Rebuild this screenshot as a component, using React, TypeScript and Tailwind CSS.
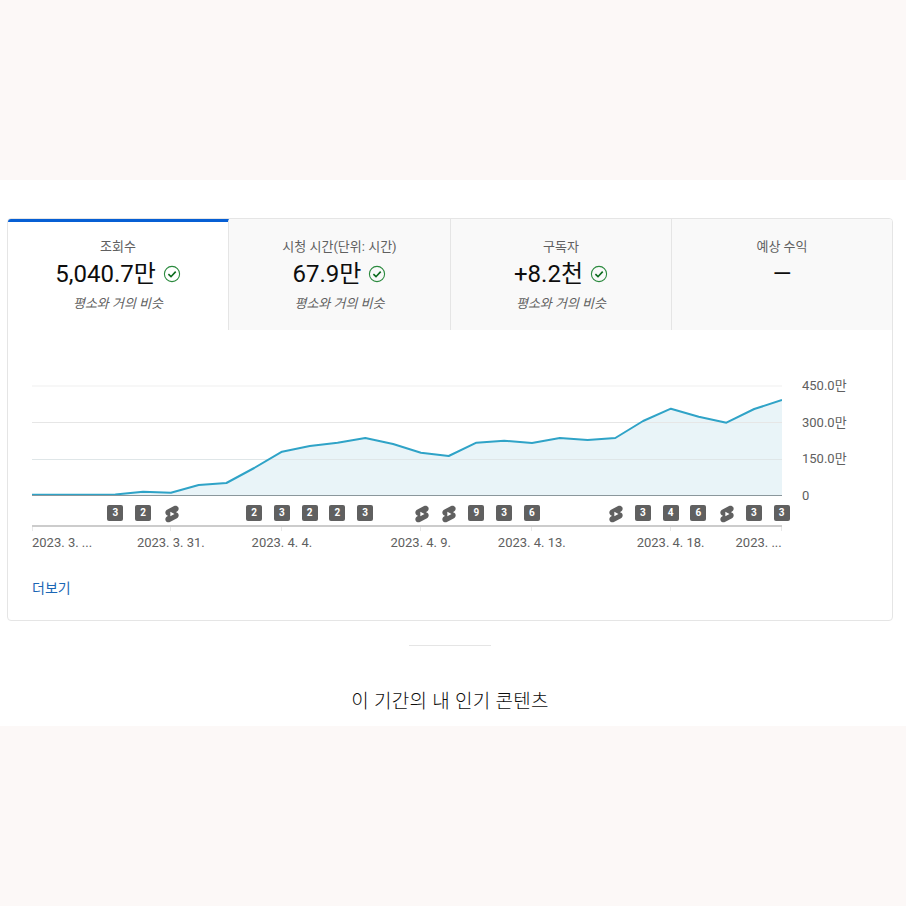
const pts: [number, number][] = [
  [0, 494.8], [27.8, 494.8], [55.6, 494.8], [83.3, 494.6], [111.1, 491.8], [138.9, 492.8], [166.7, 485], [194.4, 483],
  [222.2, 468], [250, 451.7], [277.8, 446], [305.6, 442.7], [333.3, 438], [361.1, 444], [388.9, 452.7], [416.7, 456],
  [444.4, 442.7], [472.2, 440.7], [500, 443], [527.8, 438], [555.6, 440], [583.3, 438], [611.1, 421], [638.9, 408.7],
  [666.7, 416.7], [694.4, 422.7], [722.2, 409], [750, 400],
];
const Y0 = 385;
const line = pts.map(([x, y]) => `${x},${y - Y0}`).join(" ");
const area = `0,110.5 ${line} 750,110.5`;

const markers: Record<number, string> = {
  3: "3", 4: "2", 5: "s", 8: "2", 9: "3", 10: "2", 11: "2", 12: "3", 14: "s", 15: "s", 16: "9", 17: "3", 18: "6",
  21: "s", 22: "3", 23: "4", 24: "6", 25: "s", 26: "3", 27: "3",
};
const dates: Record<number, string> = {
  0: "2023. 3. ...", 5: "2023. 3. 31.", 9: "2023. 4. 4.", 14: "2023. 4. 9.", 18: "2023. 4. 13.", 23: "2023. 4. 18.", 27: "2023. ...",
};
const cells = Array.from({ length: 28 }, (_, i) => i);

function Check() {
  return (
    <svg width="18" height="18" viewBox="0 0 18 18" fill="none" className="shrink-0">
      <circle cx="9" cy="9" r="7.6" stroke="#2b8a3e" strokeWidth="1.1" />
      <path d="M5.4 9.2 L8 11.7 L12.7 6.6" stroke="#0b6b1d" strokeWidth="1.6" />
    </svg>
  );
}

function Shorts() {
  return (
    <svg width="20" height="20" viewBox="0 0 24 24" fill="#606060" className="shrink-0 translate-x-px translate-y-px">
      <path d="M17.77 10.32l-1.2-.5L18 9.06c1.84-.96 2.53-3.23 1.56-5.06s-3.24-2.53-5.07-1.56L6 6.94c-1.29.68-2.07 2.04-2 3.49.07 1.42.93 2.67 2.22 3.25.03.01 1.2.5 1.2.5L6 14.93c-1.83.97-2.53 3.24-1.56 5.07.97 1.83 3.24 2.53 5.07 1.56l8.5-4.5c1.29-.68 2.06-2.04 1.99-3.49-.07-1.42-.94-2.68-2.23-3.25zM10 14.65v-5.3L15 12l-5 2.65z" />
    </svg>
  );
}

function Tab({ title, value, sub, active, last, width }: { title: string; value: string; sub?: string; active?: boolean; last?: boolean; width: string }) {
  return (
    <div
      className={`${width} h-[111px] flex flex-col items-center ${active ? "bg-white border-t-[3px] border-t-[#065fd4] pt-[16px] rounded-tl-[3px]" : "bg-[#f9f9f9] pt-[19px]"} ${last ? "rounded-tr-[3px]" : "border-r border-r-[#e5e5e5]"}`}
    >
      <div className="text-[13px] leading-[17px] text-[#606060]">{title}</div>
      <div className="mt-[3px] h-[32px] flex items-center gap-[7px] text-[24px] leading-[32px] text-[#0d0d0d]">
        <span>{value}</span>
        {sub && <Check />}
      </div>
      {sub && <div className="mt-[5px] text-[13px] leading-[17px] italic text-[#606060]">{sub}</div>}
    </div>
  );
}

export default function App() {
  return (
    <div className="w-[906px] h-[906px] flex flex-col bg-[#fcf8f7] font-['Roboto','Noto_Sans_CJK_KR',sans-serif]">
      <div className="h-[180px]" />
      <div className="h-[546px] bg-white pl-[7px] pr-[13px] pt-[38px]">
        <div className="h-[403px] border border-[#e5e5e5] rounded-[4px]">
          <div className="flex">
            <Tab width="w-[221px]" title="조회수" value="5,040.7만" sub="평소와 거의 비슷" active />
            <Tab width="w-[222px]" title="시청 시간(단위: 시간)" value="67.9만" sub="평소와 거의 비슷" />
            <Tab width="w-[221px]" title="구독자" value="+8.2천" sub="평소와 거의 비슷" />
            <Tab width="w-[220px]" title="예상 수익" value="—" last />
          </div>
          <div className="pl-[24px] pt-[55px]">
            <div className="flex h-[111px]">
              <svg width="750" height="111" viewBox="0 0 750 111" className="shrink-0 block">
                <polygon points={area} fill="#e9f4f8" />
                <line x1="0" x2="750" y1="1" y2="1" stroke="#f0f0f0" strokeWidth="1.2" />
                <line x1="0" x2="750" y1="37.5" y2="37.5" stroke="#e6e6e6" />
                <line x1="0" x2="750" y1="74.5" y2="74.5" stroke="#dfe6e8" />
                <polyline points={line} fill="none" stroke="#2fa3c7" strokeWidth="2" strokeLinejoin="round" />
                <line x1="0" x2="750" y1="110.5" y2="110.5" stroke="#8a979c" />
              </svg>
              <div className="ml-[20px] -mt-[7px] h-[126px] flex flex-col justify-between text-[13px] leading-[16px] text-[#606060] shrink-0">
                <div>450.0만</div>
                <div>300.0만</div>
                <div>150.0만</div>
                <div>0</div>
              </div>
            </div>
            <div className="mt-[7px] -ml-[13.89px] h-[16px] grid grid-cols-[repeat(28,27.78px)]">
              {cells.map((i) => (
                <div key={i} className="flex items-center justify-center">
                  {markers[i] === "s" ? (
                    <Shorts />
                  ) : markers[i] ? (
                    <div className="w-[16px] h-[16px] shrink-0 rounded-[2px] bg-[#606060] text-white text-[10px] font-bold leading-[16px] text-center">
                      {markers[i]}
                    </div>
                  ) : null}
                </div>
              ))}
            </div>
            <div className="mt-[6px] w-[750px] h-[2px] bg-[#cccccc]" />
            <div className="-ml-[13.89px] h-[26px] grid grid-cols-[repeat(28,27.78px)]">
              {cells.map((i) => (
                <div key={i} className="relative flex justify-center">
                  {dates[i] && <div className="w-px h-[4px] bg-[#e8e8e8]" />}
                  {dates[i] && (
                    <div className={`absolute top-[8px] whitespace-nowrap text-[13px] leading-[16px] text-[#606060] ${i === 0 ? "left-[13.89px]" : i === 27 ? "right-[13.89px]" : ""}`}>
                      {dates[i]}
                    </div>
                  )}
                </div>
              ))}
            </div>
            <div className="mt-[26px] text-[14px] leading-[18px] text-[#1a66b5]">더보기</div>
          </div>
        </div>
        <div className="mt-[24px] mx-auto w-[82px] h-px bg-[#e5e5e5]" />
        <div className="mt-[44px] text-center text-[19px] leading-[24px] tracking-[0.3px] font-light text-[#0d0d0d]">이 기간의 내 인기 콘텐츠</div>
      </div>
      <div className="flex-1" />
    </div>
  );
}
